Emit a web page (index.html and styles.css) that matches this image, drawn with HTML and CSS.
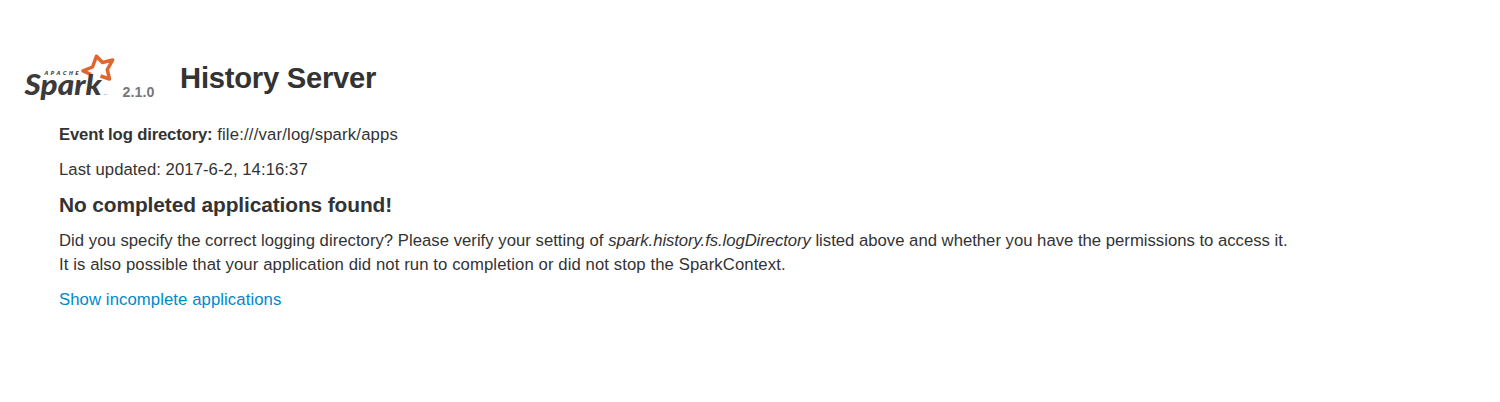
FILE: index.html
```
<!DOCTYPE html>
<html lang="en">
<head>
<meta charset="utf-8">
<title>History Server</title>
<link rel="stylesheet" href="styles.css">
</head>
<body>
<header class="masthead">
  <svg class="logo" width="94" height="50" viewBox="22 52 94 50" role="img" aria-label="Apache Spark">
    <path class="star" d="M91 74.500 L83 70.800 L92.500 67 L96.500 56.200 L102.500 62.500 L112.700 60 L107.300 69.500 L109.500 79 L100.500 76"/>
    <text class="logo-name" x="24.500" y="94.700" textLength="77" lengthAdjust="spacingAndGlyphs">Spark</text>
    <text class="logo-apache" x="44.500" y="75" textLength="34">APACHE</text>
    <text class="logo-tm" x="103.500" y="94.500">TM</text>
  </svg>
  <span class="version">2.1.0</span>
  <h1 class="title">History Server</h1>
</header>
<main class="content">
  <p class="line"><strong class="label">Event log directory:</strong> <span class="path">file:///var/log/spark/apps</span></p>
  <p class="line updated">Last updated: 2017-6-2, 14:16:37</p>
  <h2 class="empty-title">No completed applications found!</h2>
  <p class="line"><span class="hint">Did you specify the correct logging directory? Please verify your setting of</span> <em class="setting">spark.history.fs.logDirectory</em> listed above and whether you have the permissions to access it.<br><span class="note">It is also possible that your application did not run to completion or did not stop the SparkContext.</span></p>
  <a class="link" href="#">Show incomplete applications</a>
</main>
</body>
</html>
```
FILE: styles.css
```
body {
  margin: 0;
  background: #fff;
  color: #333;
  font: 16.7px/23.6px "Liberation Sans", Arial, sans-serif;
}
.masthead {
  display: flex;
  align-items: flex-start;
  padding: 52px 22px 0;
  box-sizing: border-box;
  height: 123px;
}
.logo { display: block; }
.star { fill: none; stroke: #e0662f; stroke-width: 3.5; stroke-linejoin: round; }
.logo-name { font: italic 900 29px Lato, sans-serif; fill: #3c3a3b; }
.logo-apache { font: italic bold 6px "Open Sans", sans-serif; fill: #3c3a3b; }
.logo-tm { font: 2.5px "Liberation Sans", sans-serif; fill: #777; }
.version {
  margin: 29px 0 0 6.5px;
  font-size: 14.2px;
  letter-spacing: 0.1px;
  font-weight: bold;
  color: #777;
}
.title {
  margin: 8px 0 0 25.5px;
  font-size: 29.2px;
  line-height: 36px;
  letter-spacing: -0.25px;
}
.content { padding-left: 59px; }
.line { margin: 0 0 11.8px; }
.label { letter-spacing: -0.16px; }
.path { letter-spacing: 0.18px; }
.updated { letter-spacing: 0.06px; }
.hint { letter-spacing: 0.025px; }
.setting { letter-spacing: -0.07px; }
.note { letter-spacing: 0.095px; }
.empty-title {
  margin: -1px 0 12.8px;
  font-size: 20.9px;
  line-height: 23.6px;
  letter-spacing: -0.11px;
}
.link { color: #0088cc; text-decoration: none; letter-spacing: 0.09px; }
```
